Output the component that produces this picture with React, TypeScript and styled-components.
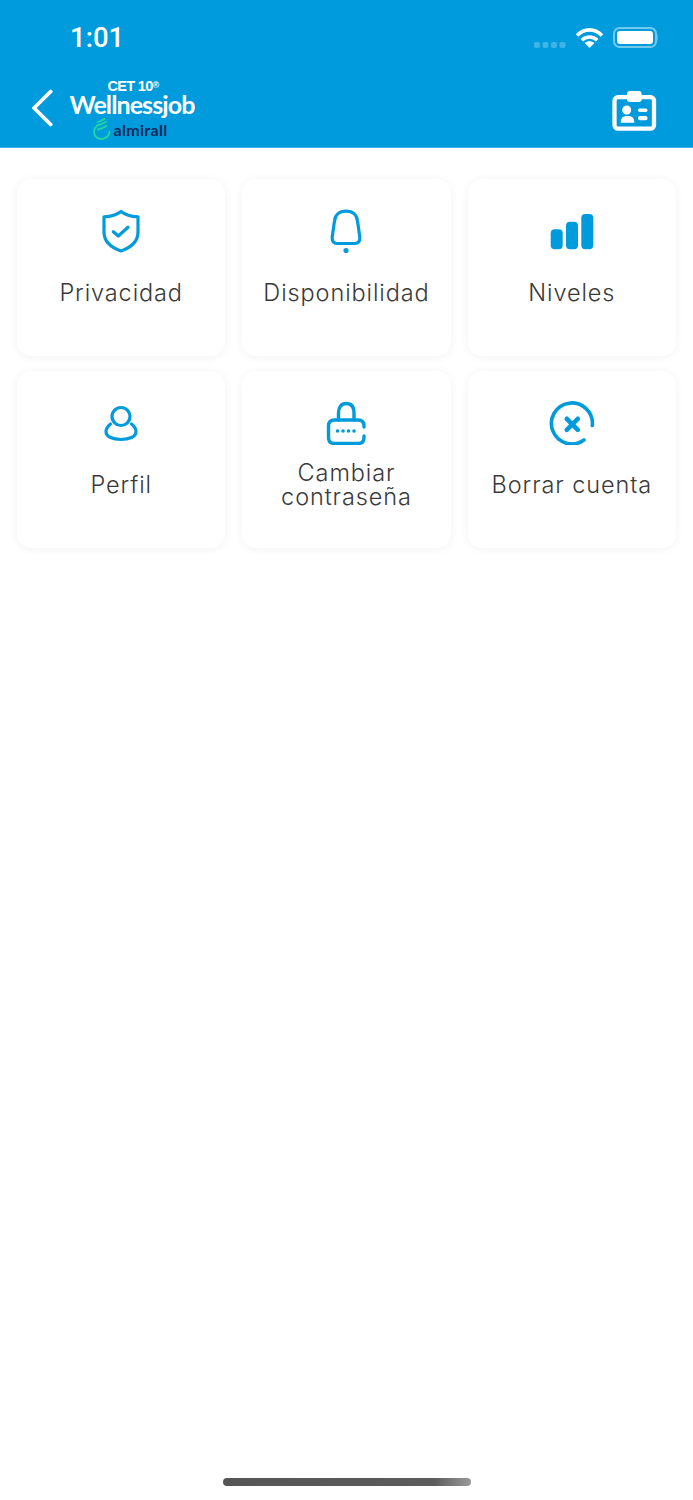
import React from "react";
import styled, { createGlobalStyle } from "styled-components";

const Global = createGlobalStyle`
  html, body { margin: 0; padding: 0; background: #fff; }
  body { font-family: "Inter", "Liberation Sans", sans-serif; }
`;

const Page = styled.div`
  width: 693px;
  height: 1500px;
  display: flex;
  flex-direction: column;
  background: #fff;
  overflow: hidden;
`;

const Header = styled.header`
  height: 148px;
  box-sizing: border-box;
  background: #009bdc;
  border-bottom: 1px solid #3fb2e3;
  display: flex;
  flex-direction: column;
  color: #fff;
`;

const StatusBar = styled.div`
  height: 76px;
  flex: none;
  box-sizing: border-box;
  padding: 21px 35px 0 70px;
  display: flex;
  align-items: flex-start;
  justify-content: space-between;
`;

const Clock = styled.span`
  font-family: "Roboto", "Liberation Sans", sans-serif;
  font-size: 27.5px;
  line-height: 34px;
  font-weight: 500;
`;

const StatusIcons = styled.div`
  display: flex;
  align-items: flex-start;
  margin-top: 6px;
`;

const NavBar = styled.div`
  flex: 1;
  display: flex;
  align-items: flex-start;
  padding: 3px 36px 0 31px;
`;

const BackIcon = styled.svg`
  width: 23px;
  height: 38px;
  margin-top: 10px;
  flex: none;
`;

const Logo = styled.div`
  width: 124px;
  margin-left: 16px;
  display: flex;
  flex-direction: column;
  align-items: center;
`;

const LogoTop = styled.span`
  font-family: "Liberation Sans", sans-serif;
  font-size: 14.5px;
  line-height: 13px;
  height: 12px;
  margin: 1px 0 0 2px;
  font-weight: 700;
  letter-spacing: -0.7px;
`;

const LogoMark = styled.sup`
  font-size: 9px;
  line-height: 0;
  vertical-align: 3px;
`;

const LogoName = styled.span`
  font-family: "Lato", "Liberation Sans", sans-serif;
  font-size: 25px;
  line-height: 24px;
  height: 24px;
  font-weight: 700;
  letter-spacing: -0.9px;
  white-space: nowrap;
`;

const LogoBrand = styled.div`
  display: flex;
  align-items: center;
  gap: 3px;
  margin-left: -4px;
`;

const BrandText = styled.span`
  font-family: "Lato", "Liberation Sans", sans-serif;
  font-size: 16px;
  line-height: 18px;
  font-weight: 700;
  color: #0d2a5b;
  letter-spacing: 0.3px;
  margin-top: 3px;
`;

const CardIcon = styled.svg`
  width: 46px;
  height: 42px;
  margin-left: auto;
  margin-top: 11px;
  flex: none;
`;

const Grid = styled.main`
  flex: 1;
  padding: 31px 17px 0;
  display: grid;
  grid-template-columns: repeat(3, 1fr);
  grid-auto-rows: 177px;
  column-gap: 17px;
  row-gap: 15px;
  align-content: start;
`;

const Card = styled.div`
  background: #fff;
  border-radius: 14px;
  box-shadow: 0 1px 10px rgba(0, 0, 0, 0.055);
  display: flex;
  flex-direction: column;
  align-items: center;
  padding-top: 30px;
  box-sizing: border-box;
`;

const IconBox = styled.div`
  height: 44px;
  display: flex;
  align-items: center;
  justify-content: center;
  color: #009bdc;
`;

const Label = styled.div`
  margin-top: 16px;
  height: 48px;
  display: flex;
  align-items: center;
  justify-content: center;
  text-align: center;
  font-family: "Inter", "Lato", sans-serif;
  font-size: 23.5px;
  line-height: 24px;
  font-weight: 300;
  letter-spacing: 0.9px;
  color: #3a3a3a;
`;

const NarrowLabel = styled(Label)`
  width: 150px;
`;

const HomeBar = styled.div`
  flex: none;
  display: flex;
  justify-content: center;
  padding-bottom: 14px;
`;

const HomeIndicator = styled.div`
  width: 248px;
  height: 8px;
  border-radius: 4px;
  background: linear-gradient(90deg, #555 0%, #5c5c5c 85%, #9a9a9a 100%);
`;

const ic = { fill: "none", stroke: "currentColor", strokeWidth: 3.2, strokeLinecap: "round" as const, strokeLinejoin: "round" as const };

const items = [
  {
    label: "Privacidad",
    icon: (
      <svg width="40" height="44" viewBox="0 0 40 44" {...ic}>
        <path d="M20 2.500c-4 3.200-9.500 5-17 5.300V23c0 9 7 15.500 17 19 10-3.500 17-10 17-19V7.800c-7.500-.3-13-2.100-17-5.300z" />
        <path d="M12.300 22.700l5 4.300L27 18.300" />
      </svg>
    ),
  },
  {
    label: "Disponibilidad",
    icon: (
      <svg width="34" height="44" viewBox="0 0 34 44" {...ic}>
        <path d="M17 2.200C10 2.200 6 6.500 5.500 12L3.200 28C2.800 32 4.500 34.500 8 34.500h18c3.500 0 5.200-2.500 4.800-6.500L28.500 12C28 6.500 24 2.200 17 2.200z" />
        <circle cx="17" cy="41.500" r="2.600" fill="currentColor" stroke="none" />
      </svg>
    ),
  },
  {
    label: "Niveles",
    icon: (
      <svg width="44" height="38" viewBox="0 0 44 38" fill="currentColor">
        <rect x="0.700" y="17.300" width="12" height="20" rx="4" />
        <rect x="16" y="9.700" width="12" height="27.600" rx="4" />
        <rect x="31.300" y="2" width="12" height="35.300" rx="4" />
      </svg>
    ),
  },
  {
    label: "Perfil",
    icon: (
      <svg width="34" height="38" viewBox="0 0 34 38" {...ic}>
        <circle cx="17" cy="12.500" r="9" />
        <path d="M6.500 20C3.500 22.500 2 25 2 27.500 2 33 9 35.500 17 35.500S32 33 32 27.500C32 25 30.500 22.500 27.500 20" />
      </svg>
    ),
  },
  {
    label: "Cambiar contraseña",
    wrap: true,
    icon: (
      <svg width="42" height="44" viewBox="0 0 42 44" {...ic} strokeWidth="3.400">
        <path d="M13.500 19v-7c0-6 2.700-9.500 7.750-9.500S29 6 29 12v7" />
        <path d="M39 26v-1c0-4-2-6-6-6H9.500c-4 0-6 2-6 6v11.500c0 4 2 6 6 6H33c4 0 6-2 6-6V35" />
        <g fill="currentColor" stroke="none">
          <circle cx="12.500" cy="30" r="1.800" />
          <circle cx="18" cy="30" r="1.800" />
          <circle cx="23.500" cy="30" r="1.800" />
          <circle cx="29" cy="30" r="1.800" />
        </g>
      </svg>
    ),
  },
  {
    label: "Borrar cuenta",
    icon: (
      <svg width="46" height="44" viewBox="0 0 46 44" {...ic} strokeWidth="3.600">
        <path d="M43.300 24.500A20.500 20.500 0 1 0 35 39" />
        <path d="M17.800 17.800l11 11M28.800 17.800l-11 11" strokeWidth="4.600" />
      </svg>
    ),
  },
];

export default function App() {
  return (
    <Page>
      <Global />
      <Header>
        <StatusBar>
          <Clock>1:01</Clock>
          <StatusIcons>
            <svg width="124" height="24" viewBox="0 0 124 24">
              <g fill="#fff" fillOpacity="0.25">
                <rect x="0" y="15" width="6" height="6" rx="2" />
                <rect x="8.500" y="15" width="6" height="6" rx="2" />
                <rect x="17" y="15" width="6" height="6" rx="2" />
                <rect x="25.500" y="15" width="6" height="6" rx="2" />
              </g>
              <g fill="none" stroke="#fff" strokeWidth="3.600" strokeLinecap="butt">
                <path d="M43 8.500C50.500 1 60.500 1 68 8.500" />
                <path d="M47.800 13.200c4.500-4.200 10.900-4.200 15.400 0" />
              </g>
              <path d="M55.500 21l-4.900-5c2.800-2.300 7-2.300 9.800 0z" fill="#fff" />
              <rect x="80" y="1" width="42" height="19" rx="5.500" fill="none" stroke="#fff" strokeOpacity="0.45" strokeWidth="2" />
              <rect x="83" y="4" width="36" height="13" rx="3" fill="#fff" />
              <path d="M123.500 7.500c1.200.4 1.500 1.500 1.500 3s-.3 2.600-1.500 3z" fill="#fff" fillOpacity="0.5" />
            </svg>
          </StatusIcons>
        </StatusBar>
        <NavBar>
          <BackIcon viewBox="0 0 23 38" fill="none" stroke="#fff" strokeWidth="3.800" strokeLinecap="round" strokeLinejoin="round">
            <path d="M19.700 2.500L3 19l16.700 16.500" />
          </BackIcon>
          <Logo>
            <LogoTop>CET 10<LogoMark>®</LogoMark></LogoTop>
            <LogoName>Wellnessjob</LogoName>
            <LogoBrand>
              <svg width="18" height="24" viewBox="0 0 18 24" fill="none" stroke="#1fd6a0" strokeWidth="1.800" strokeLinecap="round">
                <path d="M4 9.500c3-.7 6-2 9-3.800M4.500 6C7 5.300 9 4.300 11.500 2.700M5 13.500c3-.7 6-2 8.500-3.800" />
                <path d="M3.500 10.500C1.500 12 1 14 1 16c0 4 3.200 7 7.500 7s8-3.500 8-7.500" />
              </svg>
              <BrandText>almirall</BrandText>
            </LogoBrand>
          </Logo>
          <CardIcon viewBox="0 0 46 42">
            <rect x="3.500" y="7.200" width="39.500" height="31.500" rx="3.500" fill="none" stroke="#fff" strokeWidth="4.300" />
            <g fill="#fff">
              <rect x="16" y="1" width="14.700" height="11" rx="3" />
              <circle cx="15.700" cy="20" r="4.500" />
              <path d="M9.700 32.700c0-4.600 2-6.700 6-6.700h1.600c4 0 6 2.100 6 6.700z" />
              <rect x="27" y="18.500" width="9.500" height="3.600" rx="1.800" />
              <rect x="27" y="26" width="9.500" height="4.200" rx="2" />
            </g>
          </CardIcon>
        </NavBar>
      </Header>
      <Grid>
        {items.map((it) => (
          <Card key={it.label}>
            <IconBox>{it.icon}</IconBox>
            {it.wrap ? <NarrowLabel>{it.label}</NarrowLabel> : <Label>{it.label}</Label>}
          </Card>
        ))}
      </Grid>
      <HomeBar>
        <HomeIndicator />
      </HomeBar>
    </Page>
  );
}
